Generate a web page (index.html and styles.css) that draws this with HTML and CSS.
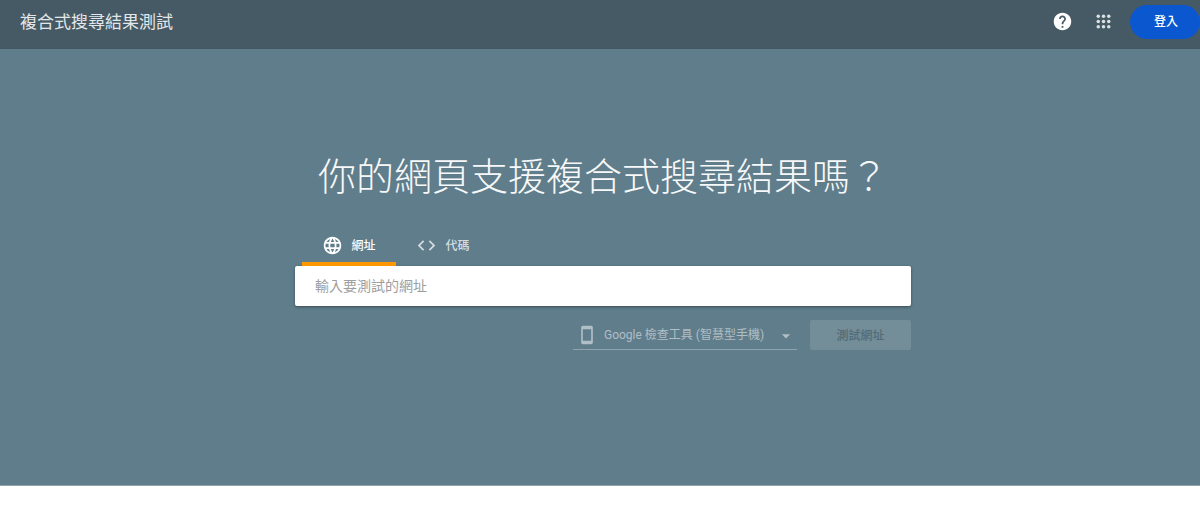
FILE: index.html
```html
<!DOCTYPE html>
<html lang="zh-Hant">
<head>
<meta charset="utf-8">
<meta name="viewport" content="width=device-width, initial-scale=1">
<title>複合式搜尋結果測試</title>
<link rel="stylesheet" href="styles.css">
</head>
<body>
<header class="topbar">
  <div class="brand">複合式搜尋結果測試</div>
  <div class="actions">
    <button class="icon-button" type="button" aria-label="說明">
      <svg width="21" height="21" viewBox="0 0 24 24" fill="currentColor"><path d="M12 2C6.48 2 2 6.48 2 12s4.48 10 10 10 10-4.48 10-10S17.52 2 12 2zm1 17h-2v-2h2v2zm2.07-7.75l-.9.92C13.45 12.9 13 13.5 13 15h-2v-.5c0-1.1.45-2.1 1.17-2.83l1.24-1.26c.37-.36.59-.86.59-1.41 0-1.1-.9-2-2-2s-2 .9-2 2H8c0-2.21 1.79-4 4-4s4 1.79 4 4c0 .88-.36 1.68-.93 2.25z"/></svg>
    </button>
    <button class="icon-button" type="button" aria-label="應用程式">
      <svg width="21" height="21" viewBox="0 0 24 24" fill="currentColor"><circle cx="6" cy="6" r="2"/><circle cx="12" cy="6" r="2"/><circle cx="18" cy="6" r="2"/><circle cx="6" cy="12" r="2"/><circle cx="12" cy="12" r="2"/><circle cx="18" cy="12" r="2"/><circle cx="6" cy="18" r="2"/><circle cx="12" cy="18" r="2"/><circle cx="18" cy="18" r="2"/></svg>
    </button>
    <a class="login" href="#login">登入</a>
  </div>
</header>
<main class="hero">
  <h1 class="headline">你的網頁支援複合式搜尋結果嗎？</h1>
  <form class="tester">
    <div class="tabs" role="tablist">
      <button class="tab tab-active" type="button" role="tab" aria-selected="true">
        <svg width="21" height="21" viewBox="0 0 24 24" fill="currentColor"><path d="M11.99 2C6.47 2 2 6.48 2 12s4.47 10 9.99 10C17.52 22 22 17.52 22 12S17.52 2 11.99 2zm6.93 6h-2.95a15.65 15.65 0 0 0-1.38-3.56A8.03 8.03 0 0 1 18.92 8zM12 4.04c.83 1.2 1.48 2.53 1.91 3.96h-3.82c.43-1.43 1.08-2.76 1.91-3.96zM4.26 14C4.1 13.36 4 12.69 4 12s.1-1.36.26-2h3.38c-.08.66-.14 1.32-.14 2s.06 1.34.14 2H4.26zm.82 2h2.95c.32 1.25.78 2.45 1.38 3.56A7.99 7.99 0 0 1 5.08 16zm2.95-8H5.08a7.99 7.99 0 0 1 4.33-3.56A15.65 15.65 0 0 0 8.03 8zM12 19.96c-.83-1.2-1.48-2.53-1.91-3.96h3.82c-.43 1.43-1.08 2.76-1.91 3.96zM14.34 14H9.66c-.09-.66-.16-1.32-.16-2s.07-1.35.16-2h4.68c.09.65.16 1.32.16 2s-.07 1.34-.16 2zm.25 5.56c.6-1.11 1.06-2.31 1.38-3.56h2.95a8.03 8.03 0 0 1-4.33 3.56zM16.36 14c.08-.66.14-1.32.14-2s-.06-1.34-.14-2h3.38c.16.64.26 1.31.26 2s-.1 1.36-.26 2h-3.38z"/></svg>
        <span class="tab-label">網址</span>
      </button>
      <button class="tab" type="button" role="tab" aria-selected="false">
        <svg width="21" height="21" viewBox="0 0 24 24" fill="currentColor"><path d="M9.4 16.6L4.8 12l4.6-4.6L8 6l-6 6 6 6 1.4-1.4zm5.2 0l4.6-4.6-4.6-4.6L16 6l6 6-6 6-1.4-1.4z"/></svg>
        <span class="tab-label">代碼</span>
      </button>
    </div>
    <input class="url" type="text" aria-label="輸入要測試的網址" placeholder="輸入要測試的網址">
    <div class="controls">
      <div class="agent">
        <svg width="20" height="20" viewBox="0 0 24 24" fill="currentColor"><path d="M17 1H7c-1.100 0-2 .9-2 2v18c0 1.100.9 2 2 2h10c1.100 0 2-.9 2-2V3c0-1.100-.9-2-2-2zm0 18H7V5h10v14z"/></svg>
        <select class="agent-select" aria-label="使用者代理程式">
          <option>Google 檢查工具 (智慧型手機)</option>
        </select>
        <svg class="caret" width="20" height="20" viewBox="0 0 24 24" fill="currentColor"><path d="M7 10l5 5 5-5z"/></svg>
      </div>
      <button class="submit" type="submit" disabled>測試網址</button>
    </div>
  </form>
</main>
</body>
</html>
```
FILE: styles.css
```css
* {
  box-sizing: border-box;
}

body {
  margin: 0;
  background: #fff;
  color: #fff;
  font-family: Roboto, "Noto Sans CJK TC", sans-serif;
  overflow-x: hidden;
}

button,
input,
select {
  font: inherit;
  color: inherit;
}

button {
  border: 0;
  background: none;
  padding: 0;
}

svg {
  display: block;
  flex: none;
}

.topbar {
  display: flex;
  align-items: center;
  justify-content: space-between;
  height: 49px;
  padding: 0 0 5px 20px;
  background: #455a64;
  border-bottom: 1px solid #425761;
}

.brand {
  font-size: 17px;
  line-height: 24px;
  color: #e3e7e9;
}

.actions {
  display: flex;
  align-items: center;
  gap: 20px;
}

.icon-button {
  color: #fff;
}

.icon-button + .icon-button {
  margin-right: -4px;
  color: #dce1e3;
}

.login {
  width: 70px;
  padding-left: 2px;
  border-radius: 17px;
  background: #0b57d0;
  color: #fff;
  font-size: 12px;
  font-weight: 500;
  line-height: 34px;
  text-align: center;
  text-decoration: none;
}

.hero {
  display: flex;
  flex-direction: column;
  align-items: center;
  padding: 100px 0 135px 6px;
  background: #607d8b;
  border-bottom: 1px solid #90a4ae;
}

.headline {
  margin: 0;
  font-size: 38px;
  font-weight: 300;
  line-height: 56px;
  color: #f6f8f9;
}

.tester {
  width: 616px;
  max-width: 100%;
  margin-top: 20px;
}

.tabs {
  display: flex;
  padding-left: 7px;
}

.tab {
  display: flex;
  align-items: center;
  justify-content: center;
  gap: 8px;
  width: 94px;
  height: 41px;
  padding-top: 4px;
  border-bottom: 4px solid transparent;
  color: #d4dce0;
  font-size: 12px;
  font-weight: 500;
}

.tab-label {
  padding-bottom: 2px;
}

.tab-active {
  border-color: #ff9800;
  color: #fff;
}

.url {
  display: block;
  width: 100%;
  height: 40px;
  padding: 0 20px;
  border: 0;
  border-radius: 2px;
  background: #fff;
  box-shadow: 0 1px 3px rgba(0, 0, 0, 0.4);
  color: #333;
  font-size: 14px;
}

.url::placeholder {
  color: #9e9e9e;
}

.controls {
  display: flex;
  justify-content: flex-end;
  gap: 13px;
  margin-top: 14px;
}

.agent {
  display: flex;
  align-items: center;
  width: 224px;
  height: 30px;
  padding-left: 4px;
  border-bottom: 1px solid #8fa4ae;
  color: #b0bec5;
}

.agent-select {
  flex: 1;
  min-width: 0;
  padding: 1px 0 0 7px;
  border: 0;
  appearance: none;
  background: transparent;
  font-size: 12px;
}

.caret {
  margin: 2px 1px 0 0;
}

.submit {
  width: 101px;
  height: 30px;
  padding-bottom: 2px;
  border-radius: 2px;
  background: #738d99;
  color: #526b77;
  font-size: 12px;
  font-weight: 500;
}
```
